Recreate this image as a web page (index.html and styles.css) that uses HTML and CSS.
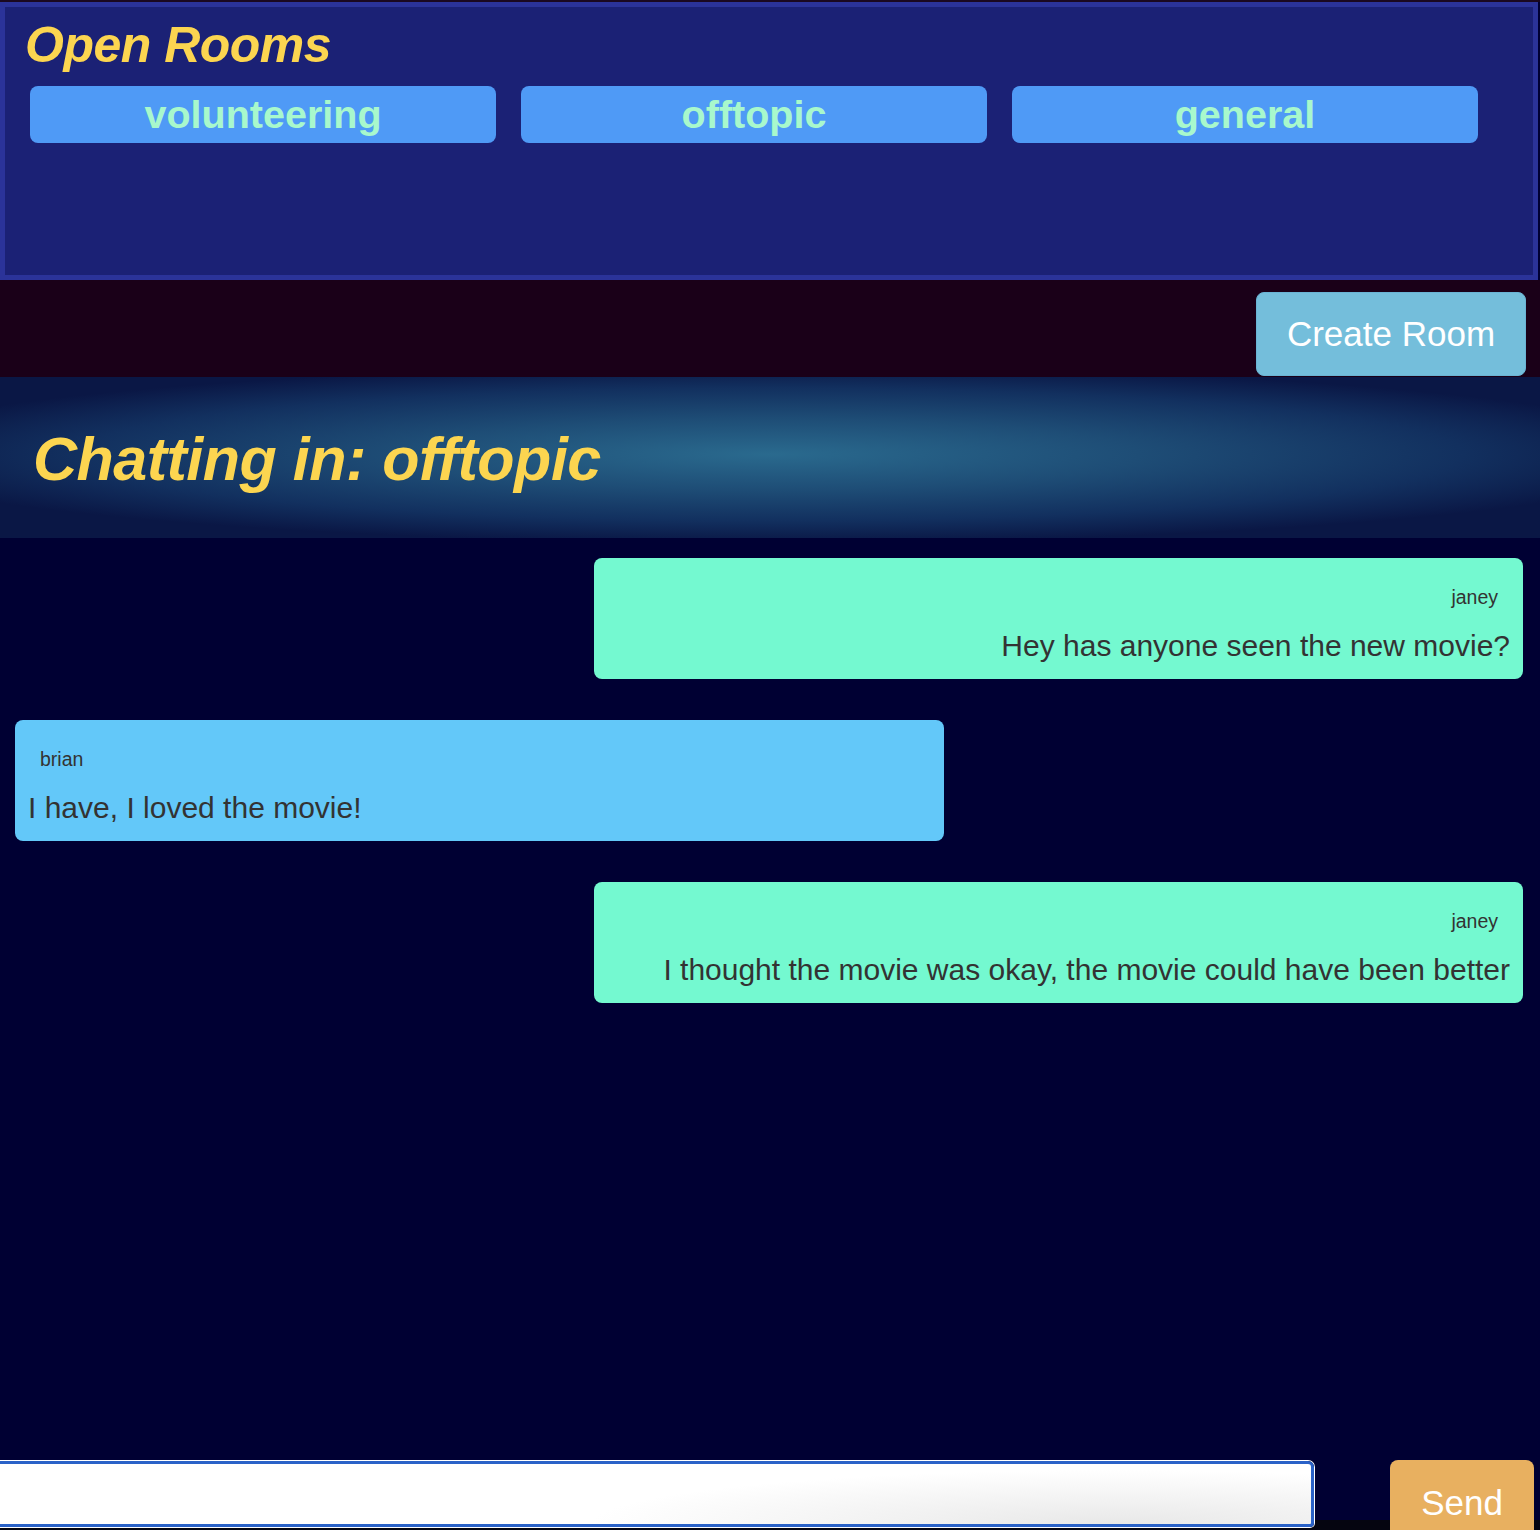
FILE: index.html
```html
<!DOCTYPE html>
<html>
<head>
<meta charset="utf-8">
<link rel="stylesheet" href="styles.css">
</head>
<body>
<div class="page">
  <section class="rooms-panel">
    <h2 class="rooms-title">Open Rooms</h2>
    <div class="rooms-list">
      <button class="room-btn">volunteering</button>
      <button class="room-btn">offtopic</button>
      <button class="room-btn">general</button>
    </div>
  </section>
  <div class="toolbar">
    <button class="create-btn">Create Room</button>
  </div>
  <header class="chat-header">
    <h1 class="chat-title">Chatting in: offtopic</h1>
  </header>
  <main class="messages">
    <div class="msg msg-self">
      <div class="msg-name">janey</div>
      <p class="msg-text">Hey has anyone seen the new movie?</p>
    </div>
    <div class="msg msg-other">
      <div class="msg-name">brian</div>
      <p class="msg-text">I have, I loved the movie!</p>
    </div>
    <div class="msg msg-self">
      <div class="msg-name">janey</div>
      <p class="msg-text">I thought the movie was okay, the movie could have been better</p>
    </div>
  </main>
  <form class="composer">
    <input class="composer-input" type="text">
    <button class="send-btn" type="button">Send</button>
  </form>
</div>
</body>
</html>
```

FILE: styles.css
```css
* { box-sizing: border-box; }
html, body { margin: 0; padding: 0; }
body {
  background: #000033;
  font-family: "Liberation Sans", Arial, sans-serif;
}
.page {
  height: 1530px;
  display: flex;
  flex-direction: column;
  padding-top: 2px;
  background: #000033;
  overflow: hidden;
  position: relative;
}
.page::before {
  content: "";
  position: absolute;
  top: 0; left: 0; right: 0;
  height: 2px;
  background: #1a0820;
}
.rooms-panel {
  width: 1538px;
  height: 278px;
  background: #1b2175;
  border: 5px solid #2b3399;
  padding: 0 0 0 20px;
  flex: none;
}
.rooms-title {
  margin: 7px 0 0 0;
  height: 72px;
  font-size: 50px;
  line-height: 62px;
  font-style: italic;
  font-weight: bold;
  color: #fcd550;
  letter-spacing: -0.5px;
}
.rooms-list {
  display: flex;
  gap: 25px;
  padding-left: 5px;
}
.room-btn {
  width: 466px;
  height: 57px;
  border: none;
  border-radius: 8px;
  background: #4f9af6;
  color: #a8f8cc;
  font-family: "Liberation Sans", Arial, sans-serif;
  font-weight: bold;
  font-size: 39.5px;
  padding: 0;
  line-height: 57px;
}
.toolbar {
  height: 97px;
  background: #1a0018;
  display: flex;
  justify-content: flex-end;
  align-items: flex-start;
  padding: 12px 14px 0 0;
  flex: none;
}
.create-btn {
  width: 270px;
  height: 84px;
  border: 1px solid #6ab4d4;
  border-radius: 8px;
  background: #74bedb;
  color: #ffffff;
  font-family: "Liberation Sans", Arial, sans-serif;
  font-size: 35px;
  padding: 0;
}
.chat-header {
  height: 161px;
  flex: none;
  background: radial-gradient(ellipse 60% 55% at 50% 48%, #2a6a8e 0%, #1e4d76 40%, #12305f 75%, #0a1745 100%);
  display: flex;
  align-items: center;
  padding-left: 33px;
}
.chat-title {
  margin: 0;
  padding-top: 2px;
  font-size: 61px;
  font-style: italic;
  font-weight: bold;
  color: #fcd550;
  letter-spacing: -0.5px;
}
.messages {
  flex: 1;
  display: flex;
  flex-direction: column;
  gap: 41px;
  padding: 20px 17px 0 15px;
}
.msg {
  width: 929px;
  height: 121px;
  border-radius: 8px;
  padding: 0 13px;
  color: #333333;
}
.msg-self {
  align-self: flex-end;
  background: #74f9d0;
  text-align: right;
}
.msg-other {
  align-self: flex-start;
  background: #63c8f9;
  text-align: left;
}
.msg-name {
  font-size: 19.5px;
  margin: 28px 12px 0 12px;
  line-height: 22px;
}
.msg-text {
  margin: 20px 0 0 0;
  font-size: 30px;
  line-height: 36px;
}
.composer {
  flex: none;
  height: 70px;
  display: flex;
  align-items: flex-start;
  gap: 76px;
  background: linear-gradient(#000033 0, #000033 60px, #050510 60px);
}
.composer-input {
  width: 1314px;
  height: 66px;
  margin-top: 1px;
  border: 3px solid #2a62c8;
  border-left: none;
  border-radius: 0 6px 4px 0;
  background: radial-gradient(ellipse 40% 90% at 85% 100%, #e8e8e8 0%, #ffffff 100%);
  outline: none;
  box-shadow: 0 0 0 1px #ffffff;
}
.send-btn {
  width: 144px;
  height: 80px;
  border: none;
  border-radius: 8px;
  background: #e8b060;
  color: #ffffff;
  font-family: "Liberation Sans", Arial, sans-serif;
  font-size: 35px;
  padding: 6px 0 0 0;
}
```
